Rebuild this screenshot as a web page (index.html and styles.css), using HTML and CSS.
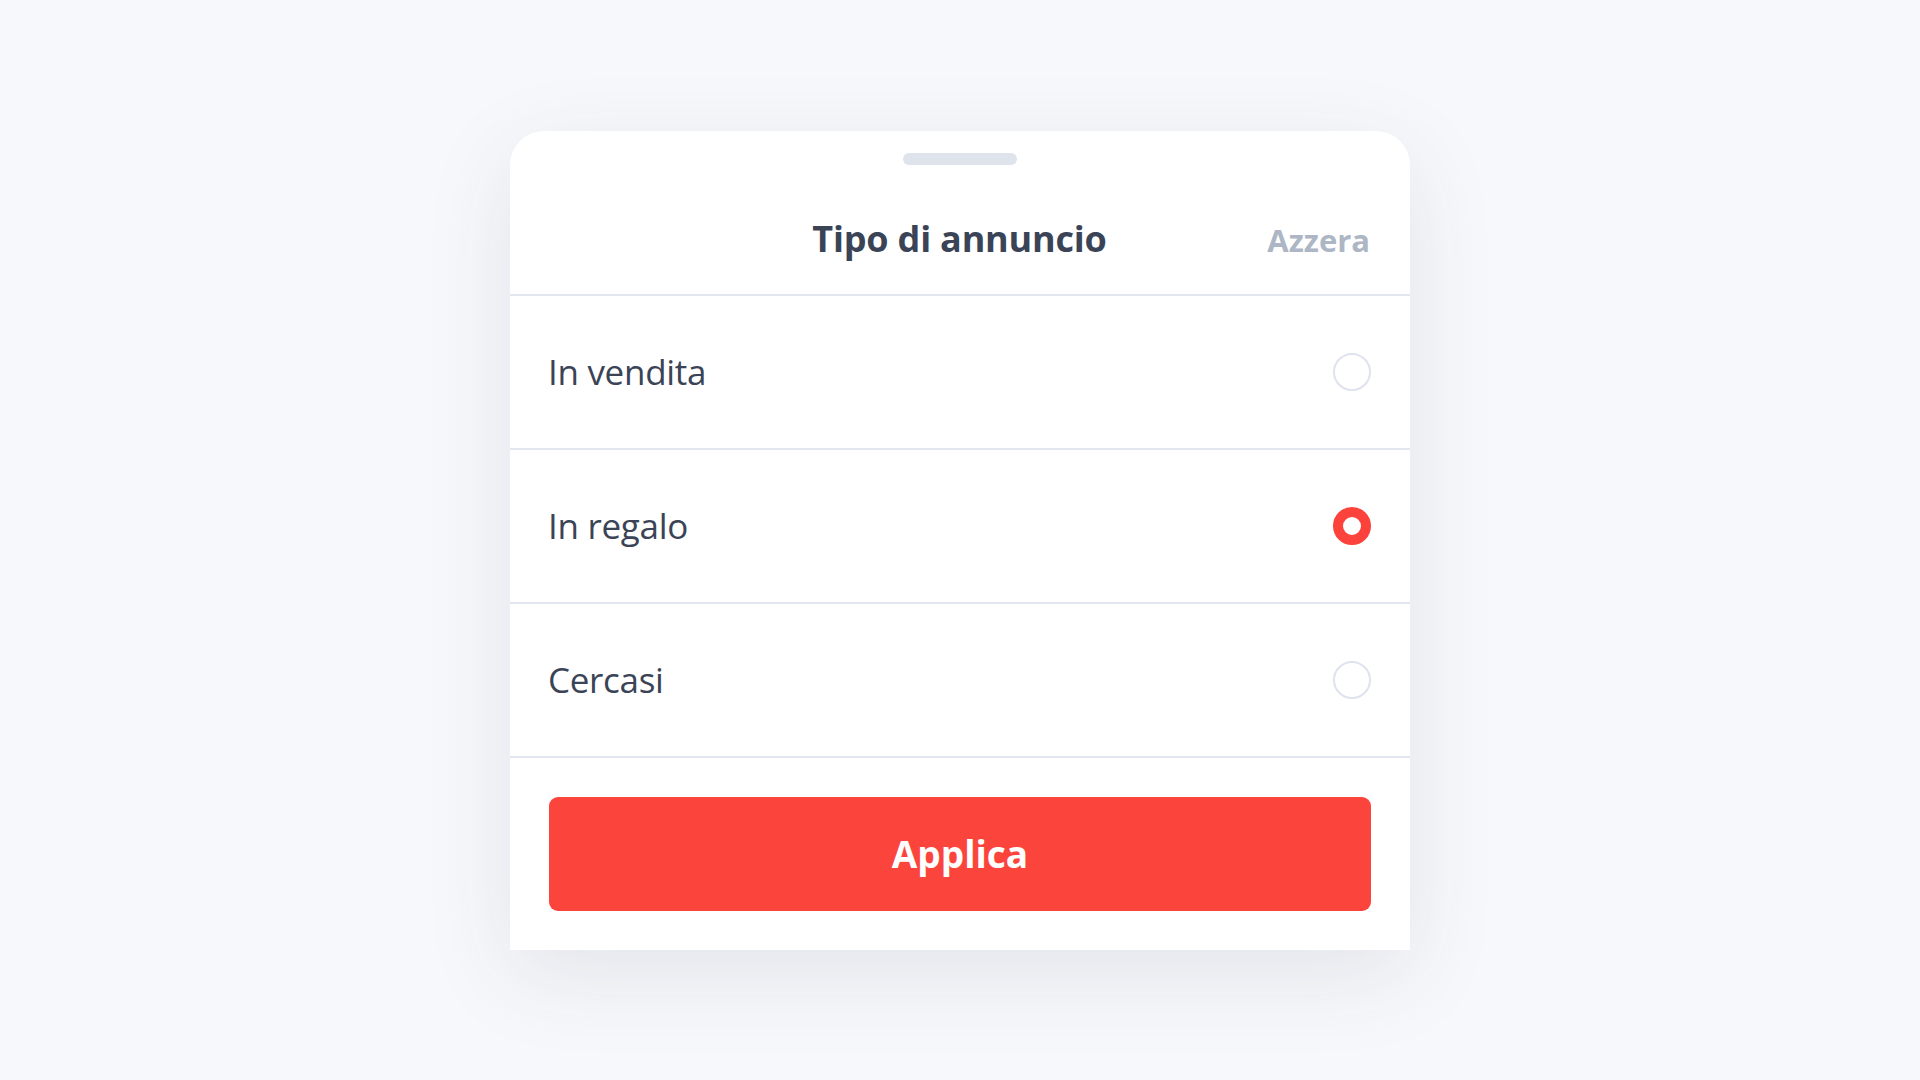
FILE: index.html
```html
<!DOCTYPE html>
<html lang="it">
<head>
  <meta charset="UTF-8">
  <title>Tipo di annuncio</title>
  <link rel="stylesheet" href="styles.css">
</head>
<body>

  <div class="sheet">
    <div class="sheet-header">
      <div class="handle"></div>
      <div class="title-row">
        <span></span>
        <h1 class="title">Tipo di annuncio</h1>
        <a class="reset-link" href="#">Azzera</a>
      </div>
    </div>

    <label class="option">
      <span class="option-label">In vendita</span>
      <input type="radio" name="tipo" value="vendita">
      <span class="radio"></span>
    </label>
    <label class="option">
      <span class="option-label">In regalo</span>
      <input type="radio" name="tipo" value="regalo" checked>
      <span class="radio"></span>
    </label>
    <label class="option">
      <span class="option-label">Cercasi</span>
      <input type="radio" name="tipo" value="cercasi">
      <span class="radio"></span>
    </label>

    <div class="sheet-footer">
      <button class="apply-btn" type="button">Applica</button>
    </div>
  </div>

</body>
</html>
```

FILE: styles.css
```css
* {
  margin: 0;
  padding: 0;
  box-sizing: border-box;
}

body {
  font-family: 'Open Sans', 'Noto Sans', sans-serif;
  background: #f7f8fb;
  height: 100vh;
  overflow: hidden;
  display: flex;
  align-items: center;
  justify-content: center;
  color: #3a4456;
}

.sheet {
  width: 900px;
  background: #fff;
  border-radius: 34px 34px 0 0;
  box-shadow: 0 24px 90px rgba(40, 55, 90, 0.1);
}

.sheet-header {
  height: 163px;
  padding: 22px 40px 0 39px;
}

.handle {
  width: 114px;
  height: 12px;
  margin: 0 auto;
  border-radius: 6px;
  background: #dfe3ec;
}

.title-row {
  display: grid;
  grid-template-columns: 1fr auto 1fr;
  align-items: center;
  margin-top: 50px;
  height: 48px;
}

.title {
  font-size: 36px;
  line-height: 48px;
  font-weight: 700;
  letter-spacing: -0.2px;
  color: #3a4456;
}

.reset-link {
  justify-self: end;
  font-size: 31px;
  font-weight: 700;
  margin-top: 3px;
  color: #adb6c4;
  text-decoration: none;
}

.option {
  display: flex;
  align-items: center;
  justify-content: space-between;
  height: 154px;
  padding: 0 39px 0 38px;
  border-top: 2px solid #e2e6ef;
  cursor: pointer;
}

.option-label {
  font-size: 35px;
  letter-spacing: -0.3px;
  color: #3a4456;
}

.option input {
  display: none;
}

.radio {
  width: 38px;
  height: 38px;
  border-radius: 50%;
  border: 2px solid #dfe3ee;
}

.option input:checked + .radio {
  border: 10px solid #fb433b;
}

.sheet-footer {
  padding: 39px 39px 39px 39px;
  border-top: 2px solid #e2e6ef;
}

.apply-btn {
  display: block;
  width: 100%;
  height: 114px;
  border: none;
  border-radius: 9px;
  background: #fb443c;
  color: #fff;
  font-family: inherit;
  font-size: 37px;
  font-weight: 700;
  cursor: pointer;
}
```
